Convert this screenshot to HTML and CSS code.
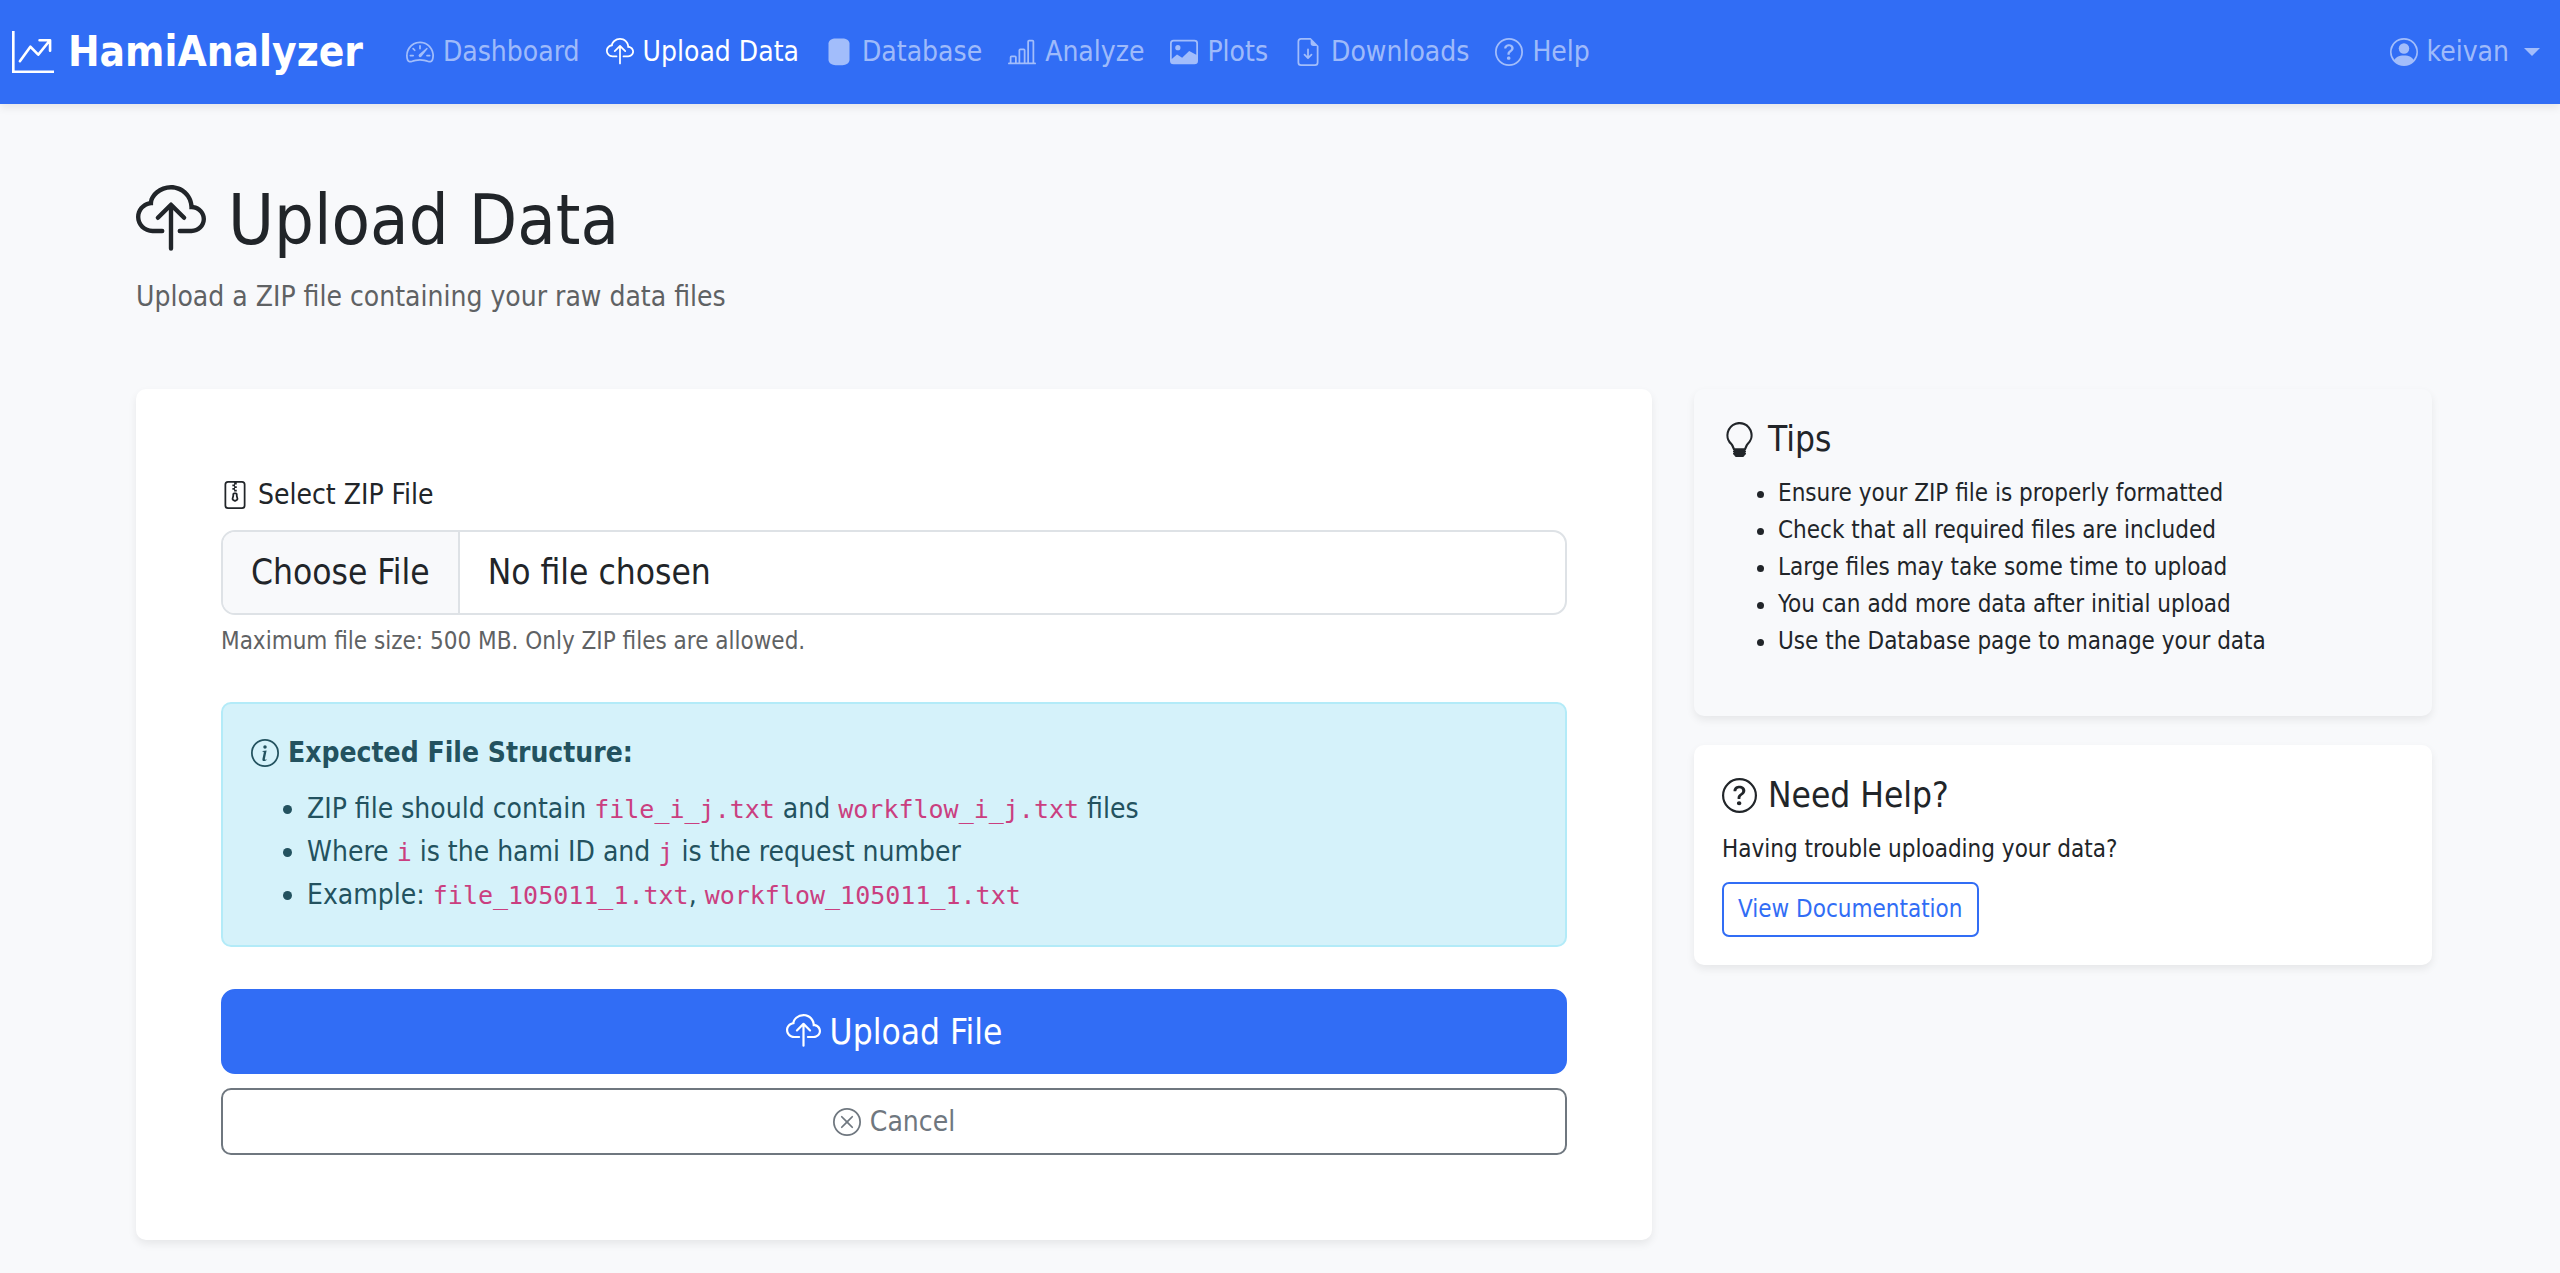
FILE: index.html
```html
<!DOCTYPE html>
<html lang="en">
<head>
  <meta charset="UTF-8">
  <meta name="viewport" content="width=device-width, initial-scale=1.0">
  <title>Upload Data - HamiAnalyzer</title>
  <link rel="stylesheet" href="styles.css">
</head>
<body>
  <!-- Icon set -->
  <svg class="sprite" aria-hidden="true">
    <symbol id="graph-up-arrow" viewBox="0 0 16 16"><path fill-rule="evenodd" d="M0 0h1v15h15v1H0zm10 3.5a.5.5 0 0 1 .5-.5h4a.5.5 0 0 1 .5.5v4a.5.5 0 0 1-1 0V4.9l-3.613 4.417a.5.5 0 0 1-.74.037L7.06 6.767l-3.656 5.027a.5.5 0 0 1-.808-.588l4-5.5a.5.5 0 0 1 .758-.06l2.609 2.61L13.445 4H10.5a.5.5 0 0 1-.5-.5"/></symbol>
    <symbol id="speedometer" viewBox="0 0 16 16"><path d="M8 4a.5.5 0 0 1 .5.5V6a.5.5 0 0 1-1 0V4.5A.5.5 0 0 1 8 4M3.732 5.732a.5.5 0 0 1 .707 0l.915.914a.5.5 0 1 1-.708.708l-.914-.915a.5.5 0 0 1 0-.707M2 10a.5.5 0 0 1 .5-.5h1.586a.5.5 0 0 1 0 1H2.5A.5.5 0 0 1 2 10m9.5 0a.5.5 0 0 1 .5-.5h1.5a.5.5 0 0 1 0 1H12a.5.5 0 0 1-.5-.5m.754-4.246a.39.39 0 0 0-.527-.02L7.547 9.31a.91.91 0 1 0 1.302 1.258l3.434-4.297a.39.39 0 0 0-.029-.518z"/><path fill-rule="evenodd" d="M0 10a8 8 0 1 1 15.547 2.661c-.442 1.253-1.845 1.602-2.932 1.25C11.309 13.488 9.475 13 8 13c-1.474 0-3.31.488-4.615.911-1.087.352-2.49.003-2.932-1.25A8 8 0 0 1 0 10m8-7a7 7 0 0 0-6.603 9.329c.203.575.923.876 1.68.63C4.397 12.533 6.358 12 8 12s3.604.532 4.923.96c.757.245 1.477-.056 1.68-.631A7 7 0 0 0 8 3"/></symbol>
    <symbol id="cloud-upload" viewBox="0 0 16 16"><path fill-rule="evenodd" d="M4.406 1.342A5.53 5.53 0 0 1 8 0c2.69 0 4.923 2 5.166 4.579C14.758 4.804 16 6.137 16 7.773 16 9.569 14.502 11 12.687 11H10a.5.5 0 0 1 0-1h2.688C13.979 10 15 8.988 15 7.773c0-1.216-1.02-2.228-2.313-2.228h-.5v-.5C12.188 2.825 10.328 1 8 1a4.53 4.53 0 0 0-2.941 1.1c-.757.652-1.153 1.438-1.153 2.055v.448l-.445.049C2.064 4.805 1 5.952 1 7.318 1 8.785 2.23 10 3.781 10H6a.5.5 0 0 1 0 1H3.781C1.708 11 0 9.366 0 7.318c0-1.763 1.266-3.223 2.942-3.593.143-.863.698-1.723 1.464-2.383"/><path fill-rule="evenodd" d="M7.646 4.146a.5.5 0 0 1 .708 0l3 3a.5.5 0 0 1-.708.708L8.5 5.707V14.5a.5.5 0 0 1-1 0V5.707L5.354 7.854a.5.5 0 1 1-.708-.708z"/></symbol>
    <symbol id="database" viewBox="0 0 16 16"><path d="M2 3.200C2 1.400 4 .300 6 .300h4c2 0 4 1.100 4 2.900v9.400c0 1.800-2 2.900-4 2.900H6c-2 0-4-1.100-4-2.900z"/></symbol>
    <symbol id="bar-chart" viewBox="0 0 16 16"><path d="M11 2a1 1 0 0 1 1-1h2a1 1 0 0 1 1 1v12h.5a.5.5 0 0 1 0 1H.5a.5.5 0 0 1 0-1H1v-3a1 1 0 0 1 1-1h2a1 1 0 0 1 1 1v3h1V7a1 1 0 0 1 1-1h2a1 1 0 0 1 1 1v7h1zm1 12h2V2h-2zm-3 0V7H7v7zm-5 0v-3H2v3z"/></symbol>
    <symbol id="image" viewBox="0 0 16 16"><path d="M6.002 5.5a1.5 1.5 0 1 1-3 0 1.5 1.5 0 0 1 3 0"/><path d="M2.002 1a2 2 0 0 0-2 2v10a2 2 0 0 0 2 2h12a2 2 0 0 0 2-2V3a2 2 0 0 0-2-2zm12 1a1 1 0 0 1 1 1v6.5l-3.777-1.947a.5.5 0 0 0-.577.093l-3.71 3.71-2.66-1.772a.5.5 0 0 0-.63.062L1.002 12V3a1 1 0 0 1 1-1z"/></symbol>
    <symbol id="file-down" viewBox="0 0 16 16"><path d="M8.5 6.5a.5.5 0 0 0-1 0v3.793L6.354 9.146a.5.5 0 1 0-.708.708l2 2a.5.5 0 0 0 .708 0l2-2a.5.5 0 0 0-.708-.708L8.5 10.293z"/><path d="M14 14V4.5L9.5 0H4a2 2 0 0 0-2 2v12a2 2 0 0 0 2 2h8a2 2 0 0 0 2-2M9.5 3A1.5 1.5 0 0 0 11 4.5h2V14a1 1 0 0 1-1 1H4a1 1 0 0 1-1-1V2a1 1 0 0 1 1-1h5.5z"/></symbol>
    <symbol id="question" viewBox="0 0 16 16"><path d="M8 15A7 7 0 1 1 8 1a7 7 0 0 1 0 14m0 1A8 8 0 1 0 8 0a8 8 0 0 0 0 16"/><path d="M5.255 5.786a.237.237 0 0 0 .241.247h.825c.138 0 .248-.113.266-.25.09-.656.54-1.134 1.342-1.134.686 0 1.314.343 1.314 1.168 0 .635-.374.927-.965 1.371-.673.489-1.206 1.06-1.168 1.987l.003.217a.25.25 0 0 0 .25.246h.811a.25.25 0 0 0 .25-.25v-.105c0-.718.273-.927 1.01-1.486.609-.463 1.244-.977 1.244-2.056 0-1.511-1.276-2.241-2.673-2.241-1.267 0-2.655.59-2.75 2.286m1.557 5.763c0 .533.425.927 1.01.927.609 0 1.028-.394 1.028-.927 0-.552-.42-.94-1.029-.94-.584 0-1.009.388-1.009.94"/></symbol>
    <symbol id="person" viewBox="0 0 16 16"><path d="M11 6a3 3 0 1 1-6 0 3 3 0 0 1 6 0"/><path fill-rule="evenodd" d="M0 8a8 8 0 1 1 16 0A8 8 0 0 1 0 8m8-7a7 7 0 0 0-5.468 11.37C3.242 11.226 4.805 10 8 10s4.757 1.225 5.468 2.37A7 7 0 0 0 8 1"/></symbol>
    <symbol id="file-zip" viewBox="0 0 16 16"><path d="M6.5 7.5a1 1 0 0 1 1-1h1a1 1 0 0 1 1 1v.938l.4 1.599a1 1 0 0 1-.416 1.074l-.93.62a1 1 0 0 1-1.109 0l-.93-.62a1 1 0 0 1-.415-1.074l.4-1.599zm2 0h-1v.938a1 1 0 0 1-.03.243l-.4 1.598.93.62.93-.62-.4-1.598a1 1 0 0 1-.03-.243z"/><path d="M2 2a2 2 0 0 1 2-2h8a2 2 0 0 1 2 2v12a2 2 0 0 1-2 2H4a2 2 0 0 1-2-2zm5.5-1H4a1 1 0 0 0-1 1v12a1 1 0 0 0 1 1h8a1 1 0 0 0 1-1V2a1 1 0 0 0-1-1H9v1H8v1h1v1H8v1h1v1H7.5V5h-1V4h1V3h-1V2h1z"/></symbol>
    <symbol id="info" viewBox="0 0 16 16"><path d="M8 15A7 7 0 1 1 8 1a7 7 0 0 1 0 14m0 1A8 8 0 1 0 8 0a8 8 0 0 0 0 16"/><path d="m8.93 6.588-2.29.287-.082.38.45.083c.294.07.352.176.288.469l-.738 3.468c-.194.897.105 1.319.808 1.319.545 0 1.178-.252 1.465-.598l.088-.416c-.2.176-.492.246-.686.246-.275 0-.375-.193-.304-.533zM9 4.5a1 1 0 1 1-2 0 1 1 0 0 1 2 0"/></symbol>
    <symbol id="x-circle" viewBox="0 0 16 16"><path d="M8 15A7 7 0 1 1 8 1a7 7 0 0 1 0 14m0 1A8 8 0 1 0 8 0a8 8 0 0 0 0 16"/><path d="M4.646 4.646a.5.5 0 0 1 .708 0L8 7.293l2.646-2.647a.5.5 0 0 1 .708.708L8.707 8l2.647 2.646a.5.5 0 0 1-.708.708L8 8.707l-2.646 2.647a.5.5 0 0 1-.708-.708L7.293 8 4.646 5.354a.5.5 0 0 1 0-.708"/></symbol>
    <symbol id="lightbulb" viewBox="0 0 16 16"><path d="M2 6a6 6 0 1 1 10.174 4.31c-.203.196-.359.4-.453.619l-.762 1.769A.5.5 0 0 1 10.5 13a.5.5 0 0 1 0 1 .5.5 0 0 1 0 1l-.224.447a1 1 0 0 1-.894.553H6.618a1 1 0 0 1-.894-.553L5.5 15a.5.5 0 0 1 0-1 .5.5 0 0 1 0-1 .5.5 0 0 1-.46-.302l-.761-1.77a2 2 0 0 0-.453-.618A5.98 5.98 0 0 1 2 6m6-5a5 5 0 0 0-3.479 8.592c.263.254.514.564.676.941L5.83 12h4.342l.632-1.467c.162-.377.413-.687.676-.941A5 5 0 0 0 8 1"/></symbol>
  </svg>

  <nav class="navbar">
    <a class="brand" href="#"><svg class="icon"><use href="#graph-up-arrow"/></svg>HamiAnalyzer</a>
    <ul class="nav-list">
      <li><a class="nav-link" href="#"><svg class="icon"><use href="#speedometer"/></svg>Dashboard</a></li>
      <li><a class="nav-link active" href="#"><svg class="icon"><use href="#cloud-upload"/></svg>Upload Data</a></li>
      <li><a class="nav-link" href="#"><svg class="icon"><use href="#database"/></svg>Database</a></li>
      <li><a class="nav-link" href="#"><svg class="icon"><use href="#bar-chart"/></svg>Analyze</a></li>
      <li><a class="nav-link" href="#"><svg class="icon"><use href="#image"/></svg>Plots</a></li>
      <li><a class="nav-link" href="#"><svg class="icon"><use href="#file-down"/></svg>Downloads</a></li>
      <li><a class="nav-link" href="#"><svg class="icon"><use href="#question"/></svg>Help</a></li>
    </ul>
    <a class="nav-link user-menu" href="#"><svg class="icon"><use href="#person"/></svg>keivan<span class="caret"></span></a>
  </nav>

  <main class="container">
    <header class="page-header">
      <h1><svg class="icon"><use href="#cloud-upload"/></svg>Upload Data</h1>
      <p>Upload a ZIP file containing your raw data files</p>
    </header>

    <div class="row">
      <form class="card upload-card">
        <label class="file-label" for="zip-file"><svg class="icon"><use href="#file-zip"/></svg>Select ZIP File</label>
        <input class="file-input" type="file" id="zip-file" accept=".zip">
        <p class="help-text">Maximum file size: 500 MB. Only ZIP files are allowed.</p>

        <div class="alert">
          <strong class="alert-title"><svg class="icon"><use href="#info"/></svg>Expected File Structure:</strong>
          <ul>
            <li>ZIP file should contain <code>file_i_j.txt</code> and <code>workflow_i_j.txt</code> files</li>
            <li>Where <code>i</code> is the hami ID and <code>j</code> is the request number</li>
            <li>Example: <code>file_105011_1.txt</code>, <code>workflow_105011_1.txt</code></li>
          </ul>
        </div>

        <div class="actions">
          <button class="btn btn-primary" type="submit"><svg class="icon"><use href="#cloud-upload"/></svg>Upload File</button>
          <a class="btn btn-secondary" href="#"><svg class="icon"><use href="#x-circle"/></svg>Cancel</a>
        </div>
      </form>

      <aside class="sidebar">
        <section class="card side-card tips">
          <h2><svg class="icon"><use href="#lightbulb"/></svg>Tips</h2>
          <ul>
            <li>Ensure your ZIP file is properly formatted</li>
            <li>Check that all required files are included</li>
            <li>Large files may take some time to upload</li>
            <li>You can add more data after initial upload</li>
            <li>Use the Database page to manage your data</li>
          </ul>
        </section>
        <section class="card side-card">
          <h2><svg class="icon"><use href="#question"/></svg>Need Help?</h2>
          <p>Having trouble uploading your data?</p>
          <a class="btn btn-docs" href="#">View Documentation</a>
        </section>
      </aside>
    </div>
  </main>
</body>
</html>
```

FILE: styles.css
```css
* {
  box-sizing: border-box;
}
body {
  margin: 0;
  font-family: Tahoma, 'DejaVu Sans Condensed', 'DejaVu Sans', sans-serif;
  font-size: 28px;
  line-height: 42px;
  color: #212529;
  background: #f8f9fb;
}
h1, h2, p, ul {
  margin: 0;
  font-weight: 400;
}
a {
  text-decoration: none;
}
.sprite {
  display: none;
}
.icon {
  width: 1em;
  height: 1em;
  flex: none;
  fill: currentColor;
}

/* Navbar */
.navbar {
  display: flex;
  align-items: center;
  height: 104px;
  padding: 0 12px;
  background: #316df5;
  box-shadow: 0 4px 8px rgba(0, 0, 0, 0.075);
}
.brand {
  display: flex;
  align-items: center;
  gap: 14px;
  margin-right: 30px;
  font-size: 42px;
  font-weight: 700;
  color: #fff;
}
.nav-list {
  display: flex;
  padding: 0;
  list-style: none;
}
.nav-link {
  display: flex;
  align-items: center;
  gap: 9px;
  padding: 14px 13px;
  color: rgba(255, 255, 255, 0.55);
}
.nav-link.active {
  color: #fff;
}
.user-menu {
  margin-left: auto;
  padding-right: 8px;
}
.caret {
  margin-left: 6px;
  border-top: 8px solid;
  border-left: 8px solid transparent;
  border-right: 8px solid transparent;
}

/* Page */
.container {
  max-width: 2304px;
  margin: 0 auto;
  padding: 74px 0 34px 8px;
}
.page-header {
  margin-bottom: 71px;
}
.page-header h1 {
  display: flex;
  align-items: center;
  gap: 22px;
  margin-bottom: 14px;
  font-size: 70px;
  line-height: 84px;
}
.page-header p {
  line-height: 42px;
  color: #5f6264;
}
.row {
  display: grid;
  grid-template-columns: minmax(0, 1516fr) minmax(0, 738fr);
  gap: 42px;
  align-items: start;
}
.card {
  background: #fff;
  border-radius: 10px;
  box-shadow: 0 4px 8px rgba(0, 0, 0, 0.075);
}

/* Upload form */
.upload-card {
  padding: 85px;
}
.file-label {
  display: flex;
  align-items: center;
  gap: 9px;
  margin-bottom: 14px;
}
.file-input {
  display: block;
  width: 100%;
  height: 85px;
  border: 2px solid #dee2e6;
  border-radius: 14px;
  font: inherit;
  font-size: 35px;
  line-height: 81px;
  color: #212529;
  overflow: hidden;
}
.file-input::file-selector-button {
  height: 81px;
  margin: 0 28px 0 0;
  padding: 0 28px;
  border: 0;
  border-right: 2px solid #dee2e6;
  font: inherit;
  color: #212529;
  background: #f8f9fb;
}
.help-text {
  margin-top: 7px;
  font-size: 24px;
  line-height: 38px;
  color: #5f6264;
}
.alert {
  margin-top: 42px;
  padding: 28px;
  border: 2px solid #b3ebf8;
  border-radius: 10px;
  color: #23525f;
  background: #d5f2fa;
}
.alert-title {
  display: flex;
  align-items: center;
  gap: 9px;
  margin-bottom: 14px;
}
.alert ul {
  padding-left: 56px;
}
.alert code {
  font-family: 'DejaVu Sans Mono', monospace;
  font-size: 25px;
  color: #ca3f80;
}
.actions {
  display: grid;
  gap: 14px;
  margin-top: 42px;
}
.btn {
  display: flex;
  align-items: center;
  justify-content: center;
  gap: 9px;
  border: 2px solid;
  border-radius: 10px;
  font-family: inherit;
}
.btn-primary {
  height: 85px;
  border-color: #316df5;
  border-radius: 14px;
  font-size: 35px;
  color: #fff;
  background: #316df5;
}
.btn-secondary {
  height: 67px;
  color: #6f777f;
}

/* Sidebar */
.sidebar {
  display: grid;
  gap: 29px;
}
.side-card {
  padding: 28px;
  font-size: 24px;
  line-height: 37px;
}
.side-card h2 {
  display: flex;
  align-items: center;
  gap: 11px;
  margin-bottom: 14px;
  font-size: 35px;
  line-height: 44px;
}
.tips {
  padding-bottom: 56px;
  background: #f8f9fb;
}
.tips ul {
  padding-left: 56px;
}
.btn-docs {
  width: fit-content;
  margin-top: 14px;
  padding: 7px 14px;
  border-radius: 7px;
  color: #316df5;
}
```
